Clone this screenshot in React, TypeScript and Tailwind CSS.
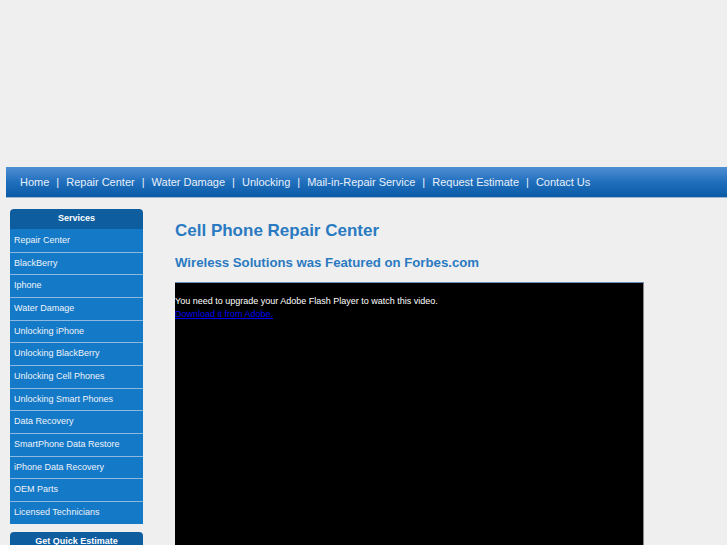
import React from 'react';

const navLinks = ['Home', 'Repair Center', 'Water Damage', 'Unlocking', 'Mail-in-Repair Service', 'Request Estimate', 'Contact Us'];

const services = [
  'Repair Center',
  'BlackBerry',
  'Iphone',
  'Water Damage',
  'Unlocking iPhone',
  'Unlocking BlackBerry',
  'Unlocking Cell Phones',
  'Unlocking Smart Phones',
  'Data Recovery',
  'SmartPhone Data Restore',
  'iPhone Data Recovery',
  'OEM Parts',
  'Licensed Technicians',
];

export default function App() {
  return (
    <div className="min-h-[545px] h-[545px] overflow-hidden bg-[#efefef] font-['Liberation_Sans',Arial,sans-serif]">
      {/* empty header area */}
      <div className="h-[167px]" />

      {/* Top nav */}
      <div className="ml-[6px] h-[31px] bg-gradient-to-b from-[#4f8fd3] via-[#1f6fbd] to-[#0a5aa6] border-b border-[#9fb8d2] flex items-center pl-[14px] text-[11px] text-[#e8f0fa]">
        {navLinks.map((l, i) => (
          <span key={l} className="flex items-center">
            {i > 0 && <span className="px-[7px]">|</span>}
            <span>{l}</span>
          </span>
        ))}
      </div>

      <div className="flex mt-[11px]">
        {/* Sidebar */}
        <div className="ml-[10px] w-[133px] shrink-0">
          <div className="rounded-t-[4px] bg-[#0e5d9e] h-[20px] flex items-center justify-center text-[9px] font-bold text-white">
            Services
          </div>
          {services.map((s, i) => (
            <div
              key={s}
              className={`h-[22.67px] bg-[#1479c6] flex items-center pl-[4px] text-[9px] text-[#eef4fb] ${i > 0 ? 'border-t border-[#8db9e0]' : ''}`}
            >
              {s}
            </div>
          ))}
          <div className="mt-[8px] rounded-t-[4px] bg-[#0e5d9e] h-[20px] flex items-center justify-center text-[9px] font-bold text-white">
            Get Quick Estimate
          </div>
        </div>

        {/* Main content */}
        <div className="ml-[32px] flex-1">
          <h1 className="mt-[11px] text-[17px] leading-[22px] font-bold text-[#2a7ac2]">Cell Phone Repair Center</h1>
          <h2 className="mt-[12px] text-[13.2px] leading-[18px] font-bold text-[#2a7ac2]">Wireless Solutions was Featured on Forbes.com</h2>
          <div className="mt-[10px] w-[469px] h-[300px] bg-black border-t border-[#6a8fb5] border-r border-r-[#888] pt-[12px] text-[9px] leading-[13px] text-white">
            <div>You need to upgrade your Adobe Flash Player to watch this video.</div>
            <a href="#" className="text-[#0000ee] underline">Download it from Adobe.</a>
          </div>
        </div>
      </div>
    </div>
  );
}
